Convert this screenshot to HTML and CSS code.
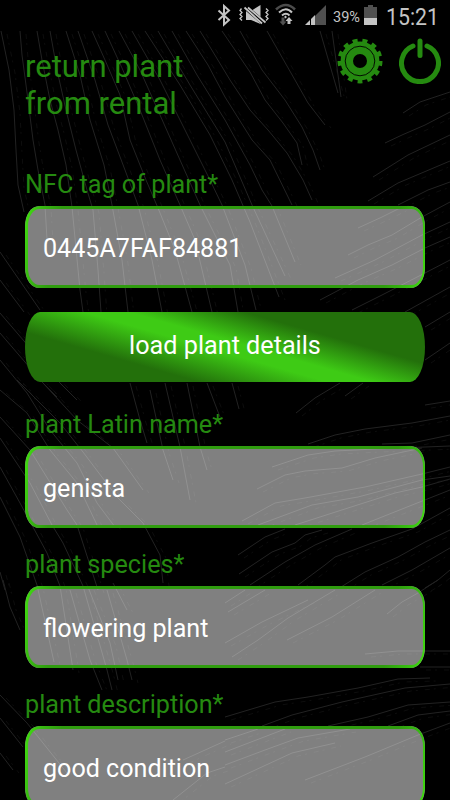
FILE: index.html
```
<!DOCTYPE html>
<html lang="en">

<head>
    <title>Return plant from rental</title>
    <meta charset="utf-8">
    <meta name="viewport" content="width=device-width, initial-scale=1.0">

    <link rel="stylesheet" href="styles.css">
</head>

<body>

    <svg class="backdrop" width="450" height="800" viewBox="0 0 450 800">
        <g id="veins">
            <path d="M1 31L9 70L14 110L16 150L18 185L24 212" />
            <path d="M20 31L22 55L28 100L33 140L38 170L45 205L47 240" />
            <path d="M37 31L42 60L50 100L58 130L66 165L72 207L80 290L83 312" />
            <path d="M50 31L57 70L66 110L76 150L87 190L93 210L98 270L101 312" />
            <path d="M66 31L80 75L90 120L104 165L112 205L122 260L128 312" />
            <path d="M78 31L95 80L108 125L125 170L138 205L152 260L162 312" />
            <path d="M92 31L105 60L120 95L130 140L146 180L158 208L175 250L192 312" />
            <path d="M105 31L122 68L140 110L160 160L180 205L195 240L212 312" />
            <path d="M119 31L140 70L160 115L180 160L200 205L230 265L238 312" />
            <path d="M132 31L160 80L185 130L210 180L222 205L245 265L256 310" />
            <path d="M145 31L180 85L210 135L232 180L250 222L279 297" />
            <path d="M158 31L190 85L225 142L252 205L285 276" />
            <path d="M172 31L197 75L225 120L250 165L262 190L272 206L295 262" />
            <path d="M186 31L208 65L225 97L252 140L270 160L292 205" />
            <path d="M200 31L210 47L230 80L250 110L268 130L287 153L303 180L312 200" />
            <path d="M222 31L250 72L265 100L283 123L297 143L302 165" />
            <path d="M240 31L262 70L285 100L302 127L313 150L320 170" />
            <path d="M267 31L295 80L308 103L325 125" />
            <path d="M320 31L338 93M332 31L341 97" />

            <path d="M403 113L420 102L450 92M385 143L402 135L425 125L450 112" />
            <path d="M373 177L408 155L450 135M368 201L398 183L450 161" />
            <path d="M398 205L428 190L450 182M358 228L382 217L402 207" />
            <path d="M348 255L368 245L392 235L422 217L450 202" />
            <path d="M335 278L375 260L422 235L450 222" />
            <path d="M320 300L358 280L392 265L425 248L450 237" />
            <path d="M352 310L382 295L425 273L450 260" />
            <path d="M405 312L450 287M425 327L450 312M425 360L450 343" />
            <path d="M296 413L315 398L340 383M345 396L363 383" />

            <path d="M0 252L40 310M0 280L24 312M0 313L60 383L77 400M0 333L43 383L57 397" />
            <path d="M43 383L77 420L113 448L143 490" />
            <path d="M17 380L60 423L83 452L117 497L143 523L160 555L163 583" />
            <path d="M0 360L27 393L50 430L77 463L97 503L115 527" />
            <path d="M0 390L27 413L50 450L77 483L97 525" />
            <path d="M0 417L30 450L67 510L77 525L98 590" />
            <path d="M0 438L30 483L52 525L63 543L83 586L107 670L112 690" />
            <path d="M0 467L20 503L47 553L60 586L73 670" />
            <path d="M0 497L20 537L37 585L54 662M0 572L5 590" />
            <path d="M3 580L10 607L20 630M70 590L90 660L102 690" />
            <path d="M88 587L110 643L118 680M107 590L127 660L132 680M113 583L127 610" />
            <path d="M130 383L140 420L147 443M150 390L163 450L173 480" />
            <path d="M165 383L180 447L190 500M187 383L200 447L207 470M207 383L220 417M232 383L239 409" />
            <path d="M0 695L27 723L67 773M0 718L23 747M0 753L13 770" />
            <path d="M173 800L207 773L225 767M183 760L225 741" />

            <path d="M308 444L335 435L365 429L412 423L450 416" />
            <path d="M382 444L412 443L450 435M425 405L450 401" />
            <path d="M272 467L308 455L335 451L375 449L450 446" />
            <path d="M257 489L285 475L305 471L342 468L375 458L422 448" />
            <path d="M242 521L275 503L305 498L365 487L422 474L450 467" />
            <path d="M258 525L312 505L358 497L422 480L450 476" />
            <path d="M295 525L348 508L395 493L422 487L450 479" />
            <path d="M362 525L392 513L450 490" />
            <path d="M238 555L265 537L285 529M239 574L272 552L295 543L305 535L322 530" />
            <path d="M250 585L285 562L315 545L352 529" />
            <path d="M298 585L325 565L335 557L372 543L412 529L450 508" />
            <path d="M341 587L365 572L398 557L425 542L450 530" />
            <path d="M382 585L412 570L450 548M425 588L438 580L450 570" />
            <path d="M225 603L245 590M228 612L265 590M225 643L262 622L308 600" />
            <path d="M232 657L258 640L288 618L335 590M287 640L332 617L375 590" />
            <path d="M387 614L402 602L418 593L438 580" />
            <path d="M365 654L398 651L450 651M420 667L450 667" />
            <path d="M225 717L275 702L308 697L358 688L398 679L430 678" />
            <path d="M262 726L292 715L342 702L405 688L450 684" />
            <path d="M328 726L368 717L408 705L450 702M388 726L418 715L450 711" />
            <path d="M225 740L258 729M225 752L285 729M225 765L265 750L298 738L350 729" />
            <path d="M225 784L292 753L335 743M305 780L365 757L418 735L450 723" />
        </g>
        <use class="veins-fine" href="#veins" x="6" y="3" />
    </svg>

    <div class="statusbar">
        <svg width="240" height="31" viewBox="210 0 240 31">
            <g class="line">
                <path d="M218.500 10.500L229 20L224 24.500V6L229 10.500L218.500 20" stroke-width="2" />
                <path d="M241.500 8.500l-1.500 2l2 2l-2 2l2 2l-2 2l2 2M266 8.500l2 2l-2 2l2 2l-2 2l2 2l-2 2" stroke-width="1.300" />
            </g>
            <path class="fill" d="M246 11h5l9.500-6v19l-9.500-4h-5z" />
            <path d="M244 6L265 24" stroke="#000" stroke-width="5" />
            <path class="line" d="M244.500 7.500L262 23.500M248 7.500L265.500 22.500" stroke-width="1.800" />

            <g class="line">
                <path class="dim" d="M276 9.500Q286 0.500 295 9.500" stroke-width="2.500" />
                <path d="M279 12.500Q286 6 292 12.500M282 15.500Q286 12 289.500 15.500" stroke-width="2" />
            </g>
            <path class="fill" d="M284 17l1.500-1.500l1.500 1.500l-1.500 1.500zM287.500 24v-3h-2l3.500-4l3.500 4h-2v3z" />
            <path class="dark" d="M281.500 17.500h3v4h2l-3.500 4l-3.500-4h2z" />

            <path class="dark" d="M306 25L326 5v20z" />
            <path class="fill" d="M305 25L315 15v10z" />
            <path d="M310.500 16v9" stroke="#000" />
            <path class="dark" d="M364 7h4V5h5v2h4v18h-13z" />
            <path class="fill" d="M364 18h13v7h-13z" />
            <text class="battery" x="333" y="21.500" textLength="27" lengthAdjust="spacingAndGlyphs">39%</text>
            <text class="clock" x="386" y="24.500" textLength="53" lengthAdjust="spacingAndGlyphs">15:21</text>
        </svg>
    </div>

    <main>
        <header>
            <h1>return plant<br>from rental</h1>
            <nav>
                <svg class="gear" width="46" height="46" viewBox="-23 -23 46 46">
                    <circle r="13.200" stroke-width="12.400" />
                    <circle r="20.500" stroke-width="4" pathLength="26" stroke-dasharray="1 1" />
                    <circle class="groove" r="14.800" stroke-width="0.900" />
                </svg>
                <svg class="power" width="42" height="46" viewBox="0 0 42 46">
                    <path d="M14 8A18.500 18.500 0 1 0 28 8" stroke-width="5" />
                    <path d="M21 3V17.500" stroke-width="5" />
                </svg>
            </nav>
        </header>

        <form>
            <label for="tag">NFC tag of plant*</label>
            <div class="field"><input id="tag" type="text" value="0445A7FAF84881"></div>

            <button type="button">load plant details</button>

            <label for="latin">plant Latin name*</label>
            <div class="field"><input id="latin" type="text" value="genista"></div>

            <label for="species">plant species*</label>
            <div class="field"><input id="species" type="text" value="flowering plant"></div>

            <label for="description">plant description*</label>
            <div class="field"><input id="description" type="text" value="good condition"></div>
        </form>
    </main>

</body>

</html>
```

FILE: styles.css
```
* {
    box-sizing: border-box;
}

body {
    margin: 0;
    width: 450px;
    height: 800px;
    overflow: hidden;
    background-color: #000;
    color: #258a10;
    font-family: Roboto, sans-serif;
}

svg {
    display: block;
    fill: none;
}

.backdrop {
    position: absolute;
    top: 0;
    left: 0;
    z-index: -1;
    stroke: #222;
    stroke-linejoin: round;
}

.veins-fine {
    opacity: 0.4;
    stroke-dasharray: 5 4 2 7;
}

.statusbar {
    display: flex;
    justify-content: flex-end;
    height: 31px;
    background-color: #000;
}

.statusbar .line {
    stroke: #c4c4c4;
}

.statusbar .line .dim {
    stroke: #4c4c4c;
}

.statusbar .fill {
    fill: #c4c4c4;
}

.statusbar .dark {
    fill: #505050;
}

.battery {
    fill: #c4c4c4;
    font-size: 15px;
}

.clock {
    fill: #c4c4c4;
    font-size: 23px;
}

main {
    padding: 0 25px;
}

header {
    display: flex;
    justify-content: space-between;
    height: 135px;
    padding-top: 17px;
}

h1 {
    margin: 0;
    font-size: 31px;
    font-weight: 400;
    line-height: 37px;
}

nav {
    display: flex;
    gap: 16px;
    margin: -10px -16px 0 0;
}

.gear circle,
.power path {
    stroke: #258a10;
    stroke-linecap: round;
}

.gear circle {
    stroke-linecap: butt;
}

.gear .groove {
    stroke: #000;
}

form {
    display: flex;
    flex-direction: column;
}

label {
    height: 40px;
    padding-top: 4px;
    font-size: 25.2px;
    line-height: 30px;
}

.field {
    position: relative;
    flex: none;
    height: 82px;
    margin-bottom: 18px;
    border-radius: 14px / 20px;
    background-color: rgba(255, 255, 255, 0.5);
}

/* gradient frame round the see-through field */
.field::before {
    content: "";
    position: absolute;
    inset: 0;
    padding: 3px 2.5px;
    border-radius: 14px / 20px;
    background: linear-gradient(100deg, #42e010 0%, #38b912 4%, #2f9c0e 9%, #2f9c0e 90%, #38c411 97%, #42e010 100%);
    mask: linear-gradient(#000 0 0) content-box exclude, linear-gradient(#000 0 0);
    pointer-events: none;
}

input {
    width: 100%;
    height: 100%;
    padding: 2px 18px 0;
    border: none;
    outline: none;
    background: none;
    color: #fff;
    font-family: inherit;
    font-size: 25.1px;
}

button {
    flex: none;
    height: 70px;
    margin: 6px 0 24px;
    padding: 0 6px 4px;
    border: none;
    border-radius: 15px / 35px;
    background: linear-gradient(196deg, #23700b 28%, #3ecb15 46%, #3ecb15 53%, #23700b 73%);
    color: #fff;
    font-family: inherit;
    font-size: 25.2px;
}
```
